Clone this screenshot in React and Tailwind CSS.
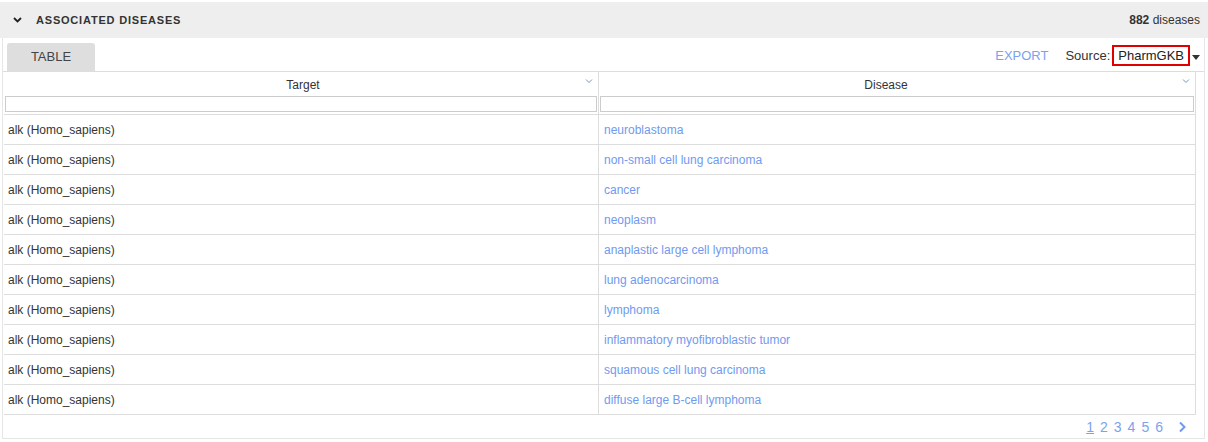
import { useState } from "react";

const rows = [
	"neuroblastoma",
	"non-small cell lung carcinoma",
	"cancer",
	"neoplasm",
	"anaplastic large cell lymphoma",
	"lung adenocarcinoma",
	"lymphoma",
	"inflammatory myofibroblastic tumor",
	"squamous cell lung carcinoma",
	"diffuse large B-cell lymphoma",
];

function SortCaret() {
	return (
		<svg width="8" height="6" viewBox="0 0 8 6" className="absolute right-[5px] top-[6px]">
			<path d="M1 1.5 L4 4.5 L7 1.5" fill="none" stroke="#7f93b8" strokeWidth="1" />
		</svg>
	);
}

function HeaderCell({ label, last = false, offset = "" }) {
	return (
		<div className={"flex flex-col " + (last ? "" : "border-r border-[#ddd]")}>
			<div className="relative h-[24px] flex items-center justify-center pt-[2px] text-[12px] text-[#333]">
				<span className={offset}>{label}</span>
				<SortCaret />
			</div>
			<div className="px-[1px] h-[18px]">
				<input className="block w-full h-[16px] border border-[#ccc] outline-none" />
			</div>
		</div>
	);
}

export default function App() {
	const [page, setPage] = useState(1);

	return (
		<div className="w-[1208px] h-[442px] bg-white pt-[2px] text-[#333] font-['Liberation_Sans',Arial,sans-serif]">
			{/* section header */}
			<div className="h-[36px] bg-[#eeeeee] flex items-center pl-[13px] pr-[8px]">
				<svg width="9" height="6" viewBox="0 0 9 6" className="mr-[14px]">
					<path d="M1 1 L4.5 4.5 L8 1" fill="none" stroke="#222" strokeWidth="1.8" />
				</svg>
				<span className="text-[11px] font-bold tracking-[0.8px] text-[#333]">ASSOCIATED DISEASES</span>
				<span className="ml-auto text-[12px] text-[#333]">
					<b>882</b> diseases
				</span>
			</div>

			<div className="ml-[2px] w-[1203px] h-[401px] border-x border-b border-[#e6e6e6] flex flex-col">
				{/* toolbar */}
				<div className="h-[34px] flex items-end border-b border-[#ddd] pl-[4px] pr-[4px]">
					<div className="w-[88px] h-[28px] bg-[#dedede] rounded-t-[3px] flex items-center justify-center text-[13px] text-[#444]">
						TABLE
					</div>
					<div className="ml-auto self-stretch flex items-center pt-[2px] text-[13px]">
						<span className="text-[#7ba2ee] mr-[17px] cursor-pointer">EXPORT</span>
						<span className="mr-[2px]">Source:</span>
						<span className="h-[21px] px-[4px] border-2 border-[#e00000] flex items-center text-[#222]">PharmGKB</span>
						<svg width="8" height="5" viewBox="0 0 8 5" className="ml-[2px] mt-[4px]">
							<path d="M0 0 H8 L4 5 Z" fill="#333" />
						</svg>
					</div>
				</div>

				{/* table */}
				<div className="flex">
					<div className="ml-[1px] w-[1192px] border-r border-[#ddd]">
						<div className="grid grid-cols-[595px_1fr] border-b border-[#ddd]">
							<HeaderCell label="Target" offset="ml-[4px]" />
							<HeaderCell label="Disease" offset="mr-[22px]" last />
						</div>
						{rows.map((d) => (
							<div key={d} className="grid grid-cols-[595px_1fr] h-[30px] border-b border-[#ddd] text-[12px]">
								<div className="border-r border-[#ddd] flex items-center pl-[4px] text-[#333]">alk (Homo_sapiens)</div>
								<div className="flex items-center pl-[5px]">
									<a className="text-[#6f9af0] cursor-pointer">{d}</a>
								</div>
							</div>
						))}
					</div>
				</div>

				{/* pagination */}
				<div className="flex-1 flex items-center justify-end pt-[1px] pr-[17px] text-[14px] text-[#7ba2ee]">
					{[1, 2, 3, 4, 5, 6].map((n) => (
						<span
							key={n}
							onClick={() => setPage(n)}
							className={"mr-[6px] cursor-pointer " + (page === n ? "underline" : "")}
						>
							{n}
						</span>
					))}
					<svg width="9" height="12" viewBox="0 0 9 12" className="ml-[9px]">
						<path d="M2 1.5 L6.5 6 L2 10.5" fill="none" stroke="#6f9af0" strokeWidth="2" />
					</svg>
				</div>
			</div>
		</div>
	);
}
